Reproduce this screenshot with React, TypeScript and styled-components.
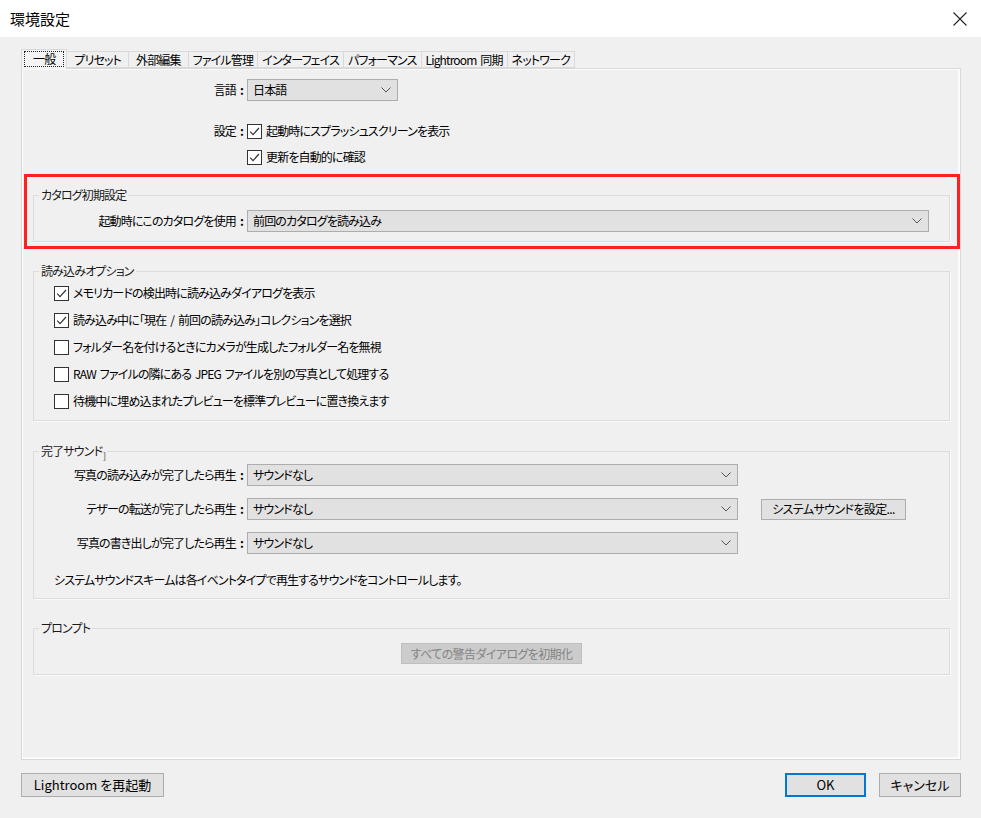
import React from "react";
import styled, { createGlobalStyle } from "styled-components";

const GlobalStyle = createGlobalStyle`
  html, body { margin: 0; padding: 0; background: #f0f0f0; }
  body {
    font-family: "Noto Sans CJK JP", "Noto Sans", sans-serif;
    font-size: 12px;
    color: #000;
    font-feature-settings: "palt";
    letter-spacing: -0.85px;
    word-spacing: 2px;
  }
  * { box-sizing: border-box; }
`;

const Window = styled.div`
  width: 981px;
  height: 818px;
  display: flex;
  flex-direction: column;
  background: #f0f0f0;
  overflow: hidden;
`;

const TitleBar = styled.div`
  height: 37px;
  background: #fff;
  display: flex;
  align-items: center;
  justify-content: space-between;
  padding: 0 13px 0 10px;
`;

const Title = styled.div`
  font-size: 15px;
  line-height: 20px;
  color: #000;
  letter-spacing: 0;
  font-feature-settings: normal;
`;

const Close = styled.div`
  width: 16px;
  height: 16px;
  display: flex;
  align-items: center;
  justify-content: center;
`;

const Body = styled.div`
  display: flex;
  flex-direction: column;
  padding: 12px 20px 0 21px;
`;

const TabStrip = styled.div`
  display: flex;
  align-items: flex-end;
  height: 19px;
  position: relative;
  z-index: 1;
`;

const Tab = styled.div<{ $active?: boolean; $wide?: boolean }>`
  height: ${(p) => (p.$active ? "20px" : "17px")};
  margin-bottom: ${(p) => (p.$active ? "-1px" : "0")};
  padding: ${(p) => (p.$active ? "1px 2px 2px" : p.$wide ? "0 7px" : "0 4px")};
  border: 1px solid #d9d9d9;
  border-bottom: ${(p) => (p.$active ? "none" : "1px solid #d9d9d9")};
  margin-left: -1px;
  &:first-child { margin-left: 0; }
  background: ${(p) => (p.$active ? "#f4f4f4" : "#f0f0f0")};
  font-size: 12px;
  line-height: 15px;
  white-space: nowrap;
  display: flex;
  align-items: center;
`;

const Focus = styled.span`
  border: 1px dotted #222;
  padding: 0 8px;
  line-height: 14px;
`;

const Panel = styled.div`
  height: 692px;
  border: 1px solid #d9d9d9;
  box-shadow: inset -2px -2px 0 #fbfbfb, inset 1px 1px 0 #fbfbfb;
  padding: 10px 10px 0 11px;
  display: flex;
  flex-direction: column;
`;

const TopSection = styled.div`
  padding-left: 21px;
  display: flex;
  flex-direction: column;
`;

const Row = styled.div<{ $h?: number }>`
  display: flex;
  align-items: center;
  height: ${(p) => p.$h ?? 22}px;
`;

const Stack = styled.div<{ $gap: number; $top?: number }>`
  display: flex;
  flex-direction: column;
  gap: ${(p) => p.$gap}px;
  margin-top: ${(p) => p.$top ?? 0}px;
`;

const Label = styled.div`
  width: 193px;
  padding-right: 4px;
  text-align: right;
  white-space: nowrap;
  line-height: 16px;
`;

const Colon = styled.span`
  margin-left: 4px;
  font-weight: 700;
`;

const SelectBox = styled.div<{ $w: number }>`
  width: ${(p) => p.$w}px;
  height: 22px;
  background: #e1e1e1;
  border: 1px solid #adadad;
  display: flex;
  align-items: center;
  justify-content: space-between;
  padding: 0 6px 0 5px;
  line-height: 16px;
  white-space: nowrap;
`;

const CheckRow = styled.label`
  display: flex;
  align-items: center;
  gap: 4px;
  height: 20px;
  white-space: nowrap;
  line-height: 16px;
`;

const Box = styled.span`
  width: 15px;
  height: 15px;
  background: #fff;
  border: 1px solid #333;
  display: flex;
  align-items: center;
  justify-content: center;
  flex: none;
`;

const Highlight = styled.div`
  margin: 7px -10px 0 -9px;
  border: 3px solid #fe1f1f;
  padding: 10px 7px 4px 6px;
`;

const Group = styled.fieldset<{ $pt: number; $pb: number; $top?: number }>`
  margin: ${(p) => p.$top ?? 0}px 0 0 0;
  min-width: 0;
  border: 1px solid #dcdcdc;
  box-shadow: 1px 1px 0 #fafafa;
  padding: ${(p) => p.$pt}px 20px ${(p) => p.$pb}px 20px;
`;

const Legend = styled.legend`
  padding: 0 2px;
  margin-left: -15px;
  line-height: 16px;
  height: 16px;
  color: #1a1a1a;
  white-space: nowrap;
`;

const Small = styled.span`
  font-size: 8px;
  line-height: 0;
  position: relative;
  top: 3px;
  margin-left: 1px;
`;

const Note = styled.div`
  margin-top: 18px;
  line-height: 16px;
  white-space: nowrap;
`;

const Center = styled.div`
  display: flex;
  justify-content: center;
`;

const PushButton = styled.button<{ $w: number; $h?: number; $primary?: boolean }>`
  width: ${(p) => p.$w}px;
  height: ${(p) => p.$h ?? 24}px;
  margin: 0;
  padding: 0;
  font: inherit;
  font-size: 12px;
  line-height: 16px;
  letter-spacing: -0.6px;
  color: #000;
  background: #e1e1e1;
  border: ${(p) => (p.$primary ? "2px solid #0078d7" : "1px solid #adadad")};
  white-space: nowrap;
  &:disabled {
    background: #cccccc;
    border-color: #bfbfbf;
    color: #838383;
  }
`;

const SideButton = styled(PushButton)`
  margin-left: 23px;
`;

const FooterButton = styled(PushButton)`
  font-size: 13px;
  letter-spacing: 0;
`;

const Footer = styled.div`
  margin-top: 13px;
  display: flex;
  justify-content: space-between;
  align-items: center;
`;

const FooterRight = styled.div`
  display: flex;
  gap: 13px;
`;

const Chevron = () => (
  <svg width="10" height="6" viewBox="0 0 10 6">
    <polyline points="0.5,0.5 5,5 9.5,0.5" fill="none" stroke="#555" strokeWidth="1" />
  </svg>
);

const Check = () => (
  <svg width="13" height="13" viewBox="0 0 13 13">
    <polyline points="2.2,6.6 5,9.6 11,3" fill="none" stroke="#333" strokeWidth="1.2" />
  </svg>
);

const Select = ({ w, value }: { w: number; value: string }) => (
  <SelectBox $w={w}>
    <span>{value}</span>
    <Chevron />
  </SelectBox>
);

const CheckItem = ({ checked, text }: { checked?: boolean; text: string }) => (
  <CheckRow>
    <Box>{checked && <Check />}</Box>
    <span>{text}</span>
  </CheckRow>
);

const FieldLabel = ({ text }: { text?: string }) => (
  <Label>
    {text}
    {text && <Colon>:</Colon>}
  </Label>
);

const tabs = [
  { t: "一般" },
  { t: "プリセット", wide: true },
  { t: "外部編集", wide: true },
  { t: "ファイル管理" },
  { t: "インターフェイス" },
  { t: "パフォーマンス" },
  { t: "Lightroom 同期" },
  { t: "ネットワーク" },
];

export default function App() {
  return (
    <Window>
      <GlobalStyle />
      <TitleBar>
        <Title>環境設定</Title>
        <Close>
          <svg width="14" height="14" viewBox="0 0 14 14">
            <path d="M0.5 0.5 L13.5 13.5 M13.5 0.5 L0.5 13.5" stroke="#222" strokeWidth="1.1" />
          </svg>
        </Close>
      </TitleBar>
      <Body>
        <TabStrip>
          {tabs.map(({ t, wide }, i) =>
            i === 0 ? (
              <Tab key={t} $active>
                <Focus>{t}</Focus>
              </Tab>
            ) : (
              <Tab key={t} $wide={wide}>
                {t}
              </Tab>
            )
          )}
        </TabStrip>
        <Panel>
          <TopSection>
            <Row>
              <FieldLabel text="言語" />
              <Select w={151} value="日本語" />
            </Row>
            <Stack $gap={6} $top={20}>
              <Row $h={20}>
                <FieldLabel text="設定" />
                <CheckItem checked text="起動時にスプラッシュスクリーンを表示" />
              </Row>
              <Row $h={20}>
                <FieldLabel />
                <CheckItem checked text="更新を自動的に確認" />
              </Row>
            </Stack>
          </TopSection>

          <Highlight>
            <Group $pt={7} $pb={9}>
              <Legend>カタログ初期設定</Legend>
              <Row>
                <FieldLabel text="起動時にこのカタログを使用" />
                <Select w={682} value="前回のカタログを読み込み" />
              </Row>
            </Group>
          </Highlight>

          <Group $pt={4} $pb={9} $top={14}>
            <Legend>読み込みオプション</Legend>
            <Stack $gap={7}>
              <CheckItem checked text="メモリカードの検出時に読み込みダイアログを表示" />
              <CheckItem checked text="読み込み中に「現在 / 前回の読み込み」コレクションを選択" />
              <CheckItem text="フォルダー名を付けるときにカメラが生成したフォルダー名を無視" />
              <CheckItem text="RAW ファイルの隣にある JPEG ファイルを別の写真として処理する" />
              <CheckItem text="待機中に埋め込まれたプレビューを標準プレビューに置き換えます" />
            </Stack>
          </Group>

          <Group $pt={5} $pb={10} $top={22}>
            <Legend>
              完了サウンド<Small>]</Small>
            </Legend>
            <Stack $gap={12}>
              <Row>
                <FieldLabel text="写真の読み込みが完了したら再生" />
                <Select w={491} value="サウンドなし" />
              </Row>
              <Row>
                <FieldLabel text="テザーの転送が完了したら再生" />
                <Select w={491} value="サウンドなし" />
                <SideButton $w={145} $h={21}>
                  システムサウンドを設定...
                </SideButton>
              </Row>
              <Row>
                <FieldLabel text="写真の書き出しが完了したら再生" />
                <Select w={491} value="サウンドなし" />
              </Row>
            </Stack>
            <Note>システムサウンドスキームは各イベントタイプで再生するサウンドをコントロールします。</Note>
          </Group>

          <Group $pt={7} $pb={10} $top={21}>
            <Legend>プロンプト</Legend>
            <Center>
              <PushButton $w={181} $h={21} disabled>
                すべての警告ダイアログを初期化
              </PushButton>
            </Center>
          </Group>
        </Panel>
        <Footer>
          <FooterButton $w={143}>Lightroom を再起動</FooterButton>
          <FooterRight>
            <FooterButton $w={81} $primary>
              OK
            </FooterButton>
            <FooterButton $w={82}>キャンセル</FooterButton>
          </FooterRight>
        </Footer>
      </Body>
    </Window>
  );
}
